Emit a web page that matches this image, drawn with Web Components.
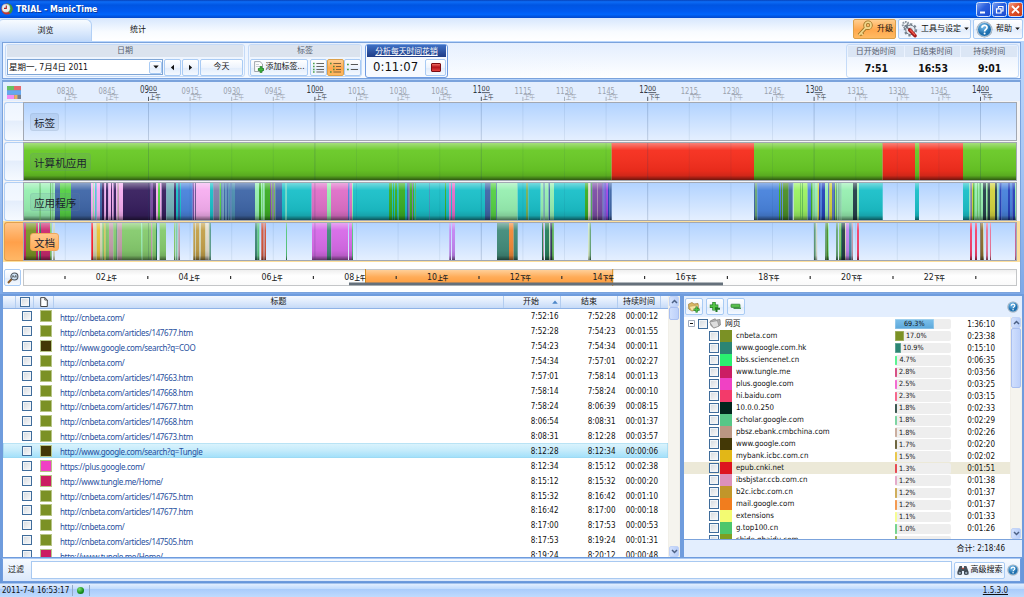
<!DOCTYPE html>
<html lang="en">
<head>
<meta charset="utf-8">
<title>ManicTime</title>
<style>
html,body{margin:0;height:100%;overflow:hidden}
body{font:8px/10px "DejaVu Sans Condensed","DejaVu Sans","Noto Sans CJK SC",sans-serif;color:#111;--line:#7ba3dc;--soft:#bcd5f7}
</style>
</head>
<body>
<manic-app></manic-app>
<script>
const def = (name, html, setup) => customElements.define(name, class extends HTMLElement {
  connectedCallback() {
    if (this.shadowRoot) return;
    const t = document.createElement('template');
    t.innerHTML = '<style>*{box-sizing:border-box}:host{display:block;box-sizing:border-box}svg{display:block;flex:none}</style>' +
      (typeof html === 'function' ? html(this) : html);
    this.attachShadow({mode: 'open'}).append(t.content.cloneNode(true));
    if (setup) setup(this);
  }
});

/* ---------- icons ---------- */
const ICONS = {
  app: [12, 12, '<circle cx="6" cy="6" r="5.6" fill="#c9352b"/><path d="M6 .4A5.6 5.6 0 0 1 9 10.7L6 6z" fill="#2f9c3c"/><circle cx="5" cy="5.2" r="4.1" fill="#e9eeee" stroke="#999" stroke-width=".5"/><path d="M5.3 2.4V5.4H3" fill="none" stroke="#a22" stroke-width="1.1"/>'],
  help: [18, 18, '<defs><radialGradient id="g" cx=".4" cy=".3"><stop offset="0" stop-color="#7cc0ee"/><stop offset="1" stop-color="#1d6fae"/></radialGradient></defs><circle cx="9" cy="9" r="8.4" fill="#8b98a5"/><circle cx="9" cy="9" r="7.4" fill="url(#g)" stroke="#e8eef4" stroke-width=".8"/><path d="M6.3 7.2C6.3 3.6 11.8 3.8 11.7 7 11.7 8.8 9.1 8.9 9.1 11" fill="none" stroke="#fff" stroke-width="1.8"/><circle cx="9.1" cy="13.2" r="1.1" fill="#fff"/>'],
  key: [18, 18, '<g stroke="#9b7224" stroke-width="3.4" fill="none"><circle cx="12" cy="5.2" r="3"/><path d="M10 7.5L3 15.2M4.6 12.6L7 14.8"/></g><g stroke="#f1d68b" stroke-width="1.8" fill="none"><circle cx="12" cy="5.2" r="3"/><path d="M10 7.5L3 15.2M4.6 12.6L7 14.8"/></g>'],
  tools: [18, 18, '<circle cx="5" cy="4" r="3" fill="none" stroke="#8d97a2" stroke-width="2.4" stroke-dasharray="1.7 .9"/><circle cx="10" cy="9.4" r="5" fill="#e8edf2" stroke="#66727e" stroke-width="1"/><circle cx="10" cy="9.4" r="6.1" fill="none" stroke="#78848f" stroke-width="2" stroke-dasharray="2.4 2.2"/><circle cx="10" cy="9.4" r="2" fill="#fff" stroke="#8894a0" stroke-width=".7"/><path d="M4 4.5L10 10" stroke="#6d7784" stroke-width="1.6"/><path d="M9.3 9.5L14.8 15.5" stroke="#a51a1a" stroke-width="3.8" stroke-linecap="round"/><path d="M9.5 9.2L15 15" stroke="#ee5a4c" stroke-width="1.4"/>'],
  addtag: [10, 12, '<path d="M.6.6H6L8.5 3V10.5H.6z" fill="#fdfdfd" stroke="#8a8f96" stroke-width=".8"/><path d="M2 3.5H5M2 5.5H6.5" stroke="#b6bcc4" stroke-width=".7"/><path d="M7 5.3V11.7M3.9 8.5H10" stroke="#16701a" stroke-width="2.5"/><path d="M7 5.8V11.2M4.4 8.5H9.5" stroke="#42b640" stroke-width="1.4"/>'],
  list: [12, 11, '<path d="M0 1.5H1.6M0 4.5H1.6M0 7.5H1.6M0 10H1.6" stroke="#4ba24b" stroke-width="1.3"/><path d="M3.4 1.5H11M3.4 4.5H11M3.4 7.5H11M3.4 10H11" stroke="#555" stroke-width=".9"/>'],
  tree: [12, 11, '<path d="M0 1.5H1.6M3 4.5H4.6M3 7.5H4.6M0 10H1.6" stroke="#4d8c3f" stroke-width="1.3"/><path d="M3.4 1.5H11M6 4.5H11M6 7.5H11M3.4 10H11" stroke="#735936" stroke-width=".9"/>'],
  short: [12, 11, '<path d="M0 2.5H1.8M0 7.5H1.8" stroke="#4ba24b" stroke-width="1.3"/><path d="M3.8 2.5H11M3.8 7.5H11" stroke="#444" stroke-width=".9"/>'],
  colors: [14, 13, '<rect width="14" height="13" fill="#8a93a2"/><rect width="7" height="4" fill="#67c162"/><rect x="7" width="7" height="4" fill="#e36a6f"/><rect y="4.4" width="14" height="4.3" fill="#64a7ef"/><rect y="9" width="7" height="4" fill="#f18cf2"/><rect x="7.4" y="9" width="3" height="4" fill="#efb05e"/><rect x="10.8" y="9" width="3.2" height="4" fill="#77808f"/>'],
  zoom: [12, 12, '<path d="M1 11L5 6.8" stroke="#8a5a28" stroke-width="2"/><circle cx="7.4" cy="4.5" r="3.5" fill="#cfe4f6" stroke="#4b525b" stroke-width="1.1"/><path d="M5.8 5.6V3.5L7.4 5 9 3.5V5.6" fill="none" stroke="#333" stroke-width=".8"/>'],
  page: [8, 10, '<path d="M.7.6H4.8L7.3 3V9.5H.7z" fill="#fff" stroke="#333" stroke-width=".9"/><path d="M4.8.6V3H7.3" fill="none" stroke="#333" stroke-width=".8"/>'],
  folderadd: [12, 12, '<path d="M.5 3.2L4 1.5 6 3 10 2.4 10.5 8 4 10 .8 8z" fill="#d9b866" stroke="#9d7b36" stroke-width=".7"/><path d="M1.2 5.5L10.8 4 9.6 8.4 3.5 9.8z" fill="#f6e3a4" stroke="#b6924b" stroke-width=".5"/><path d="M8.6 5.6V11.6M5.6 8.6H11.6" stroke="#197524" stroke-width="2.2"/><path d="M8.6 6V11.2M6 8.6H11.2" stroke="#4dc144" stroke-width="1.1"/>'],
  plus: [12, 12, '<path d="M5 1V9.5M.8 5.2H9.3" stroke="#217a22" stroke-width="3.4"/><path d="M7.5 4.5V11M4.2 7.8H11" stroke="#217a22" stroke-width="2"/><path d="M5 1.5V9M1.3 5.2H8.8" stroke="#54c346" stroke-width="2"/>'],
  minus: [12, 12, '<rect x="1" y="3.2" width="9" height="3.2" rx=".6" fill="#58c14c" stroke="#26752a" stroke-width=".7"/><path d="M3.5 7.2H11" stroke="#2c8430" stroke-width="1.3"/>'],
  folder: [12, 11, '<path d="M1.5 2.8L6 .8 7.5 2 11 1.5 11.4 7 5 10 1.8 7.5z" fill="#b4b4b4" stroke="#777" stroke-width=".7"/><path d="M.6 4L8.4 2.6 10 8.2 4.6 10z" fill="#dedede" stroke="#808080" stroke-width=".6"/>'],
  bino: [12, 11, '<path d="M2.6 1H5V4H7V1H9.4L11.5 6.5V9.5H7V6H5V9.5H.5V6.5z" fill="#47515a"/><circle cx="2.8" cy="7.9" r="1.7" fill="#95a6b4" stroke="#262d33" stroke-width=".7"/><circle cx="9.2" cy="7.9" r="1.7" fill="#95a6b4" stroke="#262d33" stroke-width=".7"/><path d="M5 3.3H7" stroke="#b84a3a" stroke-width="1.3"/>'],
  left: [5, 7, '<path d="M4 .8V6.2L.9 3.5z" fill="#111"/>'],
  right: [5, 7, '<path d="M1 .8V6.2L4.1 3.5z" fill="#111"/>'],
  down: [6, 4, '<path d="M.3.5H5.7L3 3.6z" fill="#111"/>'],
  sort: [6, 4, '<path d="M.2 3.8H5.8L3 .5z" fill="#4d86c8"/>'],
  chevup: [7, 5, '<path d="M1 4L3.5 1.5 6 4" fill="none" stroke="#4d6185" stroke-width="1.5"/>'],
  chevdown: [7, 5, '<path d="M1 1L3.5 3.5 6 1" fill="none" stroke="#4d6185" stroke-width="1.5"/>']
};
def('mt-icon', el => {
  const [w, h, p] = ICONS[el.getAttribute('name')], s = +(el.getAttribute('size') || w);
  return `<style>:host{flex:none;width:${s}px}</style><svg width="${s}" height="${s * h / w}" viewBox="0 0 ${w} ${h}">${p}</svg>`;
});

def('mt-button', `<style>:host{display:flex;align-items:center;justify-content:center;height:17px;border:1px solid #a9cbf4;border-radius:2px;background:linear-gradient(#fff,#eef4fd 50%,#e1ecfb 51%,#f4f9ff);white-space:nowrap;flex:none}
:host([hot]){border-color:#dba04a;background:linear-gradient(#ffce8f,#ffa84d 55%,#ffba62)}</style><slot></slot>`);

def('mt-check', `<style>:host{flex:none;width:10px;height:10px;border:1px solid #3f6c9b;background:linear-gradient(135deg,#d4d9de,#fbfbfb);box-shadow:inset 0 0 0 1px #f2f5f8}</style>`);

def('mt-scroll', el => `<style>:host{display:flex;flex-direction:column;justify-content:space-between;width:12px;flex:none;background:#f5f4ee;border:1px solid #f1efe8;border-width:0 1px}
b{display:flex;height:11px;align-items:center;justify-content:center;background:linear-gradient(90deg,#d3e1fd,#b7cdf8);border:1px solid #c2d3f6;border-radius:2px}
i{background:linear-gradient(90deg,#d0dffd,#bcd0fa);border:1px solid #a9bff0;border-radius:2px;height:${el.getAttribute('thumb')}px}
div{flex:1}</style><b><mt-icon name="chevup"></mt-icon></b><i></i><div></div><b><mt-icon name="chevdown"></mt-icon></b>`);

/* ---------- title bar ---------- */
def('mt-titlebar', `<style>
:host{display:flex;height:18px;align-items:center;padding:0 1px;background:linear-gradient(#0742b8,#0d6cf6 10%,#0055e2 28%,#005af0 62%,#0064fb 80%,#0148cc);flex:none}
span{flex:1;font:bold 8.7px/12px "DejaVu Sans Condensed",sans-serif;color:#fff;padding-left:3px;text-shadow:1px 1px 0 #0a3a9c}
b{width:15px;height:15px;border:1px solid #d5e2fb;border-radius:2.5px;margin-left:1px;background:linear-gradient(135deg,#7a9ff3,#2a5fdd 45%,#1c4bd0)}
b.c{background:linear-gradient(135deg,#f2a088,#e1532b 45%,#c83b16)}
</style><mt-icon name="app"></mt-icon><span><slot></slot></span>
<b><svg width="13" height="13"><path d="M3 9.5H8" stroke="#fff" stroke-width="2"/></svg></b>
<b><svg width="13" height="13"><path d="M5.5 5V3.5H10V8H8.5M3.5 5.8H8V10H3.5z" fill="none" stroke="#fff" stroke-width="1.2"/></svg></b>
<b class="c"><svg width="13" height="13"><path d="M3 3L10 10M10 3L3 10" stroke="#fff" stroke-width="1.8"/></svg></b>`);

/* ---------- tabs ---------- */
def('mt-tabs', `<style>
:host{display:flex;height:23px;padding-top:1px;background:linear-gradient(#d7e7fd,#f8fbff 60%,#fff);flex:none;align-items:flex-start}
.t{height:22px;width:92px;text-align:center;line-height:22px}
.on{border:1px solid #b2d0f6;border-bottom:0;border-left:0;border-radius:3px 6px 0 0;background:linear-gradient(#f7fbff,#dfecfd 50%,#c3daf9)}
.sp{flex:1}
mt-button{height:20px;padding:0 2px;justify-content:flex-start}
</style><div class="t on">浏览</div><div class="t">统计</div><div class="sp"></div>
<mt-button hot style="width:43px;gap:3px"><mt-icon name="key"></mt-icon>升级</mt-button>
<mt-button style="width:73px;margin-left:2px;gap:3px"><mt-icon name="tools" size="17"></mt-icon><span style="flex:1">工具与设定</span><mt-icon name="down" size="5"></mt-icon></mt-button>
<mt-button style="width:50px;margin:0 1px 0 2px;gap:3px"><mt-icon name="help" size="17"></mt-icon><span style="flex:1">帮助</span><mt-icon name="down" size="5"></mt-icon></mt-button>`);

/* ---------- toolbar ---------- */
def('mt-group', el => `<style>:host{display:flex;flex-direction:column;height:33px;border:1px solid #c5dbf8;border-radius:3px;padding:0 1px;flex:none}
h4{margin:0;height:12px;font-weight:400;font-size:8px;line-height:12px;color:#56606e;background:#dbe3ee;text-align:center}
div{display:flex;flex:1;align-items:center;padding-top:1px}</style><h4>${el.getAttribute('label')}</h4><div><slot></slot></div>`);
def('mt-toolbar', `<style>
:host{display:flex;height:37px;margin:0 3px 0 2px;padding:1px 1px 0 2px;border:1px solid var(--line);background:linear-gradient(90deg,#eef5ff,#fff0 60%),linear-gradient(#e3eefe,#fff);flex:none}
.combo{display:flex;align-items:center;width:157px;height:16px;border:1px solid #7fa6d6;background:#fff;padding-left:1px;margin-right:1px}
.combo span{flex:1;white-space:nowrap;font-size:8.5px}.combo mt-button{width:13px;height:13px}
.timer{width:83px;height:34px;border:1px solid #6f9be0;border-radius:3px;margin-left:3px;background:#f7faff}
.timer h4{margin:0 1px;height:12px;background:linear-gradient(#3f70c4,#1f3c86);color:#fff;text-align:center;font:7.8px/12px "Noto Sans CJK SC",sans-serif;text-decoration:underline}
.timer div{display:flex;height:20px;align-items:center;justify-content:space-between;padding:0 1px 0 7px;font:13px/18px "DejaVu Sans Condensed",sans-serif}
.red{width:10px;height:9px;border:1px solid #7c0d12;border-radius:1px;background:linear-gradient(#ee6a62,#b3131b 45%,#e1413f)}
.stats{display:flex;width:173px;height:34px;border:1px solid #c5dbf8;border-radius:3px;padding:1px 1px;gap:1px}
.stats div{flex:1;text-align:center}.stats h4{margin:0;background:#dbe6f5;font-weight:400;font-size:8px;line-height:11px;height:11px;color:#56606e}
.stats b{display:block;font:bold 10.4px/20px "DejaVu Sans Condensed",sans-serif;padding:1px 0 0 1px}
.sp{flex:1}
</style>
<mt-group label="日期" style="width:240px"><div class="combo"><span>星期一, 7月4日 2011</span><mt-button><mt-icon name="down"></mt-icon></mt-button></div>
<mt-button style="width:17px"><mt-icon name="left"></mt-icon></mt-button><mt-button style="width:17px;margin:0 1px"><mt-icon name="right"></mt-icon></mt-button><mt-button style="width:43px">今天</mt-button></mt-group>
<mt-group label="标签" style="width:114px;margin-left:3px"><mt-button style="width:58px;gap:2px;margin-right:2px"><mt-icon name="addtag"></mt-icon>添加标签...</mt-button><mt-button style="width:17px"><mt-icon name="list"></mt-icon></mt-button><mt-button hot style="width:17px"><mt-icon name="tree"></mt-icon></mt-button><mt-button style="width:17px"><mt-icon name="short"></mt-icon></mt-button></mt-group>
<div class="timer"><h4>分析每天时间花销</h4><div>0:11:07<mt-button style="width:21px"><span class="red"></span></mt-button></div></div>
<div class="sp"></div>
<div class="stats"><div><h4>日开始时间</h4><b>7:51</b></div><div><h4>日结束时间</h4><b>16:53</b></div><div><h4>持续时间</h4><b>9:01</b></div></div>`);

/* ---------- timeline ---------- */
const PAL = {a:'#97efb1',b:'#4067a8',c:'#55d044',d:'#f6aef0',e:'#38205f',f:'#1bc0c9',g:'#77b3bb',h:'#4983dc',i:'#837fa8',j:'#4d8fb0',k:'#3cae24',l:'#df70c8',m:'#7d4ea6',n:'#78b25a',
  o:'#a24be6',p:'#9bf263',q:'#2742ba',r:'#d3d33f',s:'#27414b',t:'#4c8f28',u:'#7b9426',v:'#cb2a70',w:'#e5dccb',x:'#e9c336',y:'#86cb6e',z:'#c39fac',
  A:'#ff202a',B:'#c3a04a',C:'#d7d7b4',D:'#59c97f',E:'#d4553a',F:'#d76be8',G:'#438c7b',H:'#f28938',I:'#29805c',J:'#36395f',K:'#dcefb4',L:'#c386f2',M:'#68a77a',N:'#f5426d',O:'#8d6f32',P:'#ec7598',Q:'#69c926',R:'#f62e1d',S:'#a776d2'};
const TRACKS = {
  tags: [],
  computer: [[0,'72 Q 1835 R 2262 Q 2648 R 2745 Q 2758 R 2889 Q 3050 .']],
  apps: [
    [0,'72 a 119 k 122 a 151 k 154 a 158 k 160 a 165 b 180 c 213 b 273 d 279 a 282 d 286 f 290 d 300 b 306 e 313 d 318 e 325 d 333 e 336 d 341 e 348 d 352 z 357 d 369 e 452 m 459 e 468 d 474 c 480 d 485 e 499 g 522 e 528 f 534 b 540 f 543 h 578 m 583 d 586 e 588 d 630 f 640 i 659 c 664 b 668 g 671 b 676 j 680 b 686 j 691 b 695 j 705 b'],
    [750,'15 a 27 k 33 a 37 c 40 a 44 k 60 m 63 n 67 m 71 n 76 b 96 f 107 a 110 f 185 l 231 a 243 l 294 h 299 l 306 a 309 f 417 k 426 f 429 k 432 f 435 k 441 f 446 k 465 f 471 b 476 m 479 k 487 m 489 k 492 f 496 k 498 f 537 b 539 f 585 k 588 f 598 l 603 f 606 l 615 f 705 b 722 c 739 b 741 a'],
    [1500,'0 a 53 f 78 n 85 f 122 a 131 b 134 a 146 b 150 a 162 f 255 k 265 w 272 b 274 k 277 m 291 z 293 m 308 b 311 o 314 q 317 o 324 q 328 b 335 . 762 b 765 .'],
    [2250,'0 . 12 b 15 M 22 h 87 k 90 h 93 t 97 h 99 t 116 b 128 . 131 p 150 k 152 p 157 k 159 p 173 h 183 k 188 a 203 r 207 q 212 h 216 q 225 a 235 q 238 r 247 q 250 b 255 p 258 M 262 a 265 M 269 a 272 M 274 a 309 s 321 a 327 f 398 . 495 f 507 . 639 f 658 a 661 i 666 r 669 k 674 a 681 k 683 a 689 k 692 a 699 s 708 a 711 M 714 s 720 r 735 s 742 a 746 h 750 q 755 h 774 q 780 h 787 q 795 a 800 .']
  ],
  docs: [
    [0,'72 v 78 u 108 v 114 a 117 v 120 I 123 v 150 y 155 . 160 C 164 . 274 A 279 C 290 x 300 C 307 y 313 x 317 y 327 z 340 y 348 M 352 z 366 y 423 a 427 y 453 z 457 y 468 I 471 . 479 y 498 . 522 y 526 . 529 D 532 . 535 z 540 . 580 B 586 C 588 B 598 C 603 B 615 C 618 w 626 C 629 I 632 .'],
    [750,'15 G 22 D 28 . 34 E 41 z 44 E 48 . 108 D 111 . 186 F 231 G 244 F 294 . 297 F 306 D 309 . 598 L 603 . 606 L 615 . 741 G 750 .'],
    [1500,'0 G 27 H 41 G 53 . 126 I 129 z 132 . 135 I 148 K 151 J 157 k 161 . 265 K 269 M 273 .'],
    [2250,'192 M 197 . 199 C 201 . 225 M 229 t 234 a 237 . 258 M 264 . 267 y 273 I 276 s 285 C 288 L 297 j 305 z 309 . 321 N 327 . 660 N 666 . 675 N 681 . 691 O 699 C 702 . 708 P 714 . 720 P 723 . 796 v 799 .']
  ]
};
const segs = name => {
  let out = '';
  for (const [off, s] of TRACKS[name]) {
    const p = s.split(' ');
    for (let i = 0; i < p.length; i += 2) {
      if (p[i + 1] === '.') continue;
      const a = (+p[i] + off) / 3, b = p[i + 2] ? (+p[i + 2] + off) / 3 : (off + 750 + (off ? 0 : 15)) / 3;
      const box = `x="${(a - 24).toFixed(2)}" width="${Math.max(b - a, .8).toFixed(2)}" height="37"`;
      out += `<rect ${box} fill="${PAL[p[i + 1]]}"/><rect ${box} fill="url(#s)"/>`;
    }
  }
  return out;
};
const ticks = (y0, y1) => Array.from({length: 23}, (_, i) => `<path d="M${(41.3 + i * 41.6).toFixed(1)} ${y0}V${y1}" stroke="#1c3c66" stroke-opacity="${(i + 2) % 4 ? .08 : .2}" stroke-width="1"/>`).join('');
def('mt-track', el => `<style>
:host{display:grid;grid-template-columns:19px 994px 1fr;height:40px;padding:1px 0 0 1px;column-gap:0}
.h{border:1px solid #b1cff5;border-right:0;border-radius:3px 0 0 3px;background:linear-gradient(#eef5ff,#f3f8ff 45%,#e4eefc 50%,#f6faff);height:39px}
.b{position:relative;border:1px solid #a2a8b2;height:39px;background:linear-gradient(#b2d3ff,#e4efff);display:flex;align-items:center}
.b svg{position:absolute;left:0;top:0}
.l{position:relative;margin-left:6px;padding:0 3px;height:18px;border-radius:3px;font:10.6px/17px "Noto Sans CJK SC",sans-serif;color:#1b2430;background:rgba(90,120,160,.13);border:1px solid rgba(110,130,160,.12)}
:host([on]){background:#fddf9c}
:host([on]) .h{border-color:#e2a04e;background:linear-gradient(#ffc58a,#ffa04a 52%,#ffb766)}
:host([on]) .l{background:linear-gradient(#ffc88d,#ffab55);border-color:#f0a75c}
</style><div class="h"></div><div class="b"><svg width="992" height="37"><defs><linearGradient id="s" x2="0" y2="1"><stop offset="0" stop-color="#fff" stop-opacity=".4"/><stop offset=".2" stop-color="#fff" stop-opacity=".04"/><stop offset=".75" stop-color="#000" stop-opacity=".06"/><stop offset=".88" stop-color="#000" stop-opacity=".15"/><stop offset="1" stop-color="#000" stop-opacity=".55"/></linearGradient></defs>${segs(el.getAttribute('data'))}${ticks(0, 37)}</svg><div class="l"><slot></slot></div></div>`);

def('mt-axis', () => {
  let s = '';
  for (let i = 0; i < 23; i++) {
    const q = (i + 2) % 4, h = 8 + Math.floor((i + 2) / 4), x = 65.3 + i * 41.6, m = ['00','15','30','45'][q];
    const hh = String(h).padStart(2, '0'), ap = h < 12 ? '上午' : '下午', col = q ? '#9aa2ad' : '#333a44';
    s += `<g fill="${col}"><text x="${x - 8.5}" y="${q ? 11.6 : 11.2}" font-size="${q ? 8 : 10}" textLength="${q ? 8.6 : 9}" lengthAdjust="spacingAndGlyphs">${hh}</text><text x="${x + .3}" y="${q ? 11.6 : 9.3}" font-size="${q ? 8 : 7.2}" textLength="8.2" lengthAdjust="spacingAndGlyphs">${m}</text><text class="c" x="${x + 1.2}" y="17.2" font-size="6" textLength="11" lengthAdjust="spacingAndGlyphs">${ap}</text><path d="M${x} 19.5V14.8M${x + .5} ${q ? 12.6 : 10.6}H${x + 8.5}" stroke="${col}" stroke-width=".8" fill="none"/></g>`;
  }
  return `<style>:host{display:flex;height:19px;align-items:center}svg.x{margin-left:-18px}mt-icon{margin:1px 0 0 4px}text{font-family:"DejaVu Sans Condensed",sans-serif}.c{font-family:"Noto Sans CJK SC",sans-serif}</style><mt-icon name="colors"></mt-icon><svg class="x" width="1018" height="20" viewBox="3 0 1018 20">${s}</svg>`;
});

def('mt-range', () => {
  let s = '';
  for (let k = 1; k < 24; k++) {
    const x = 24 + k * 41.4;
    s += k % 2 ? `<path d="M${x - .4} 7V10" stroke="#333" stroke-width="1.2"/>` :
      `<text x="${x - 11}" y="10.8" font-size="9" textLength="10" lengthAdjust="spacingAndGlyphs">${String(k).padStart(2, '0')}</text><text class="c" x="${x - .6}" y="10.6" font-size="6" textLength="10.8" lengthAdjust="spacingAndGlyphs">${k < 12 ? '上午' : '下午'}</text>`;
  }
  return `<style>:host{display:flex;margin:7px 0 0 1px;height:18px}mt-button{width:17px;margin-right:2px}
  text{font-family:"DejaVu Sans Condensed",sans-serif;fill:#222}.c{font-family:"Noto Sans CJK SC",sans-serif;font-weight:bold}</style>
  <mt-button><mt-icon name="zoom"></mt-icon></mt-button>
  <svg width="995" height="18" viewBox="23 0 995 18"><defs><linearGradient id="o" x2="0" y2="1"><stop offset="0" stop-color="#ffcf98"/><stop offset=".5" stop-color="#ffac58"/><stop offset="1" stop-color="#ff9c3c"/></linearGradient><linearGradient id="w" x2="0" y2="1"><stop offset="0" stop-color="#eee"/><stop offset=".4" stop-color="#fff"/><stop offset="1" stop-color="#fafafa"/></linearGradient></defs>
  <rect x="23.5" y=".5" width="993" height="16" fill="url(#w)" stroke="#c4c6c8"/><rect x="365" y="1" width="248" height="14" fill="url(#o)"/><path d="M365.5 0V14M612.7 0V17" stroke="#d08a20"/><rect x="349" y="13.5" width="374" height="2.8" fill="#65707b"/>${s}</svg>`;
});

def('mt-timeline', `<style>:host{display:flex;flex-direction:column;height:213px;margin:1px 3px 0 2px;border:1px solid var(--line);border-top-width:2px;background:#e3eefe;flex:none}
.rows{background:#f4f4f6;height:161px;border-bottom:1px solid #fddf9c}
.r{flex:1;background:#fff}</style>
<mt-axis></mt-axis><div class="rows"><mt-track data="tags">标签</mt-track><mt-track data="computer">计算机应用</mt-track><mt-track data="apps">应用程序</mt-track><mt-track data="docs" on>文档</mt-track></div><div class="r"><mt-range></mt-range></div>`);

/* ---------- activity list ---------- */
const OL = '#7b9125', BR = '#433806', MG = '#cb1d63', PK = '#f041c4';
const ROWS = [
  [OL,'http://cnbeta.com/','7:52:16','7:52:28','00:00:12'],[OL,'http://cnbeta.com/articles/147677.htm','7:52:28','7:54:23','00:01:55'],
  [BR,'http://www.google.com/search?q=COO','7:54:23','7:54:34','00:00:11'],[OL,'http://cnbeta.com/','7:54:34','7:57:01','00:02:27'],
  [OL,'http://cnbeta.com/articles/147663.htm','7:57:01','7:58:14','00:01:13'],[OL,'http://cnbeta.com/articles/147668.htm','7:58:14','7:58:24','00:00:10'],
  [OL,'http://cnbeta.com/articles/147677.htm','7:58:24','8:06:39','00:08:15'],[OL,'http://cnbeta.com/articles/147668.htm','8:06:54','8:08:31','00:01:37'],
  [OL,'http://cnbeta.com/articles/147673.htm','8:08:31','8:12:28','00:03:57'],[BR,'http://www.google.com/search?q=Tungle','8:12:28','8:12:34','00:00:06'],
  [PK,'https://plus.google.com/','8:12:34','8:15:12','00:02:38'],[MG,'http://www.tungle.me/Home/','8:15:12','8:15:32','00:00:20'],
  [OL,'http://cnbeta.com/articles/147675.htm','8:15:32','8:16:42','00:01:10'],[OL,'http://cnbeta.com/articles/147677.htm','8:16:42','8:17:00','00:00:18'],
  [OL,'http://cnbeta.com/','8:17:00','8:17:53','00:00:53'],[OL,'http://cnbeta.com/articles/147505.htm','8:17:53','8:19:24','00:01:31'],
  [MG,'http://www.tungle.me/Home/','8:19:24','8:20:12','00:00:48']];
def('mt-list', () => `<style>
:host{display:flex;width:677px;height:261px;background:#fff;overflow:hidden;flex:none}
.m{flex:1;overflow:hidden}
.g{display:grid;grid-template-columns:13px 18px 20px 450px 57px 57px 50px;align-items:center}
.hd{height:13px;background:linear-gradient(#f4f8ff,#d9e7fb 60%,#c6daf7);border-bottom:1px solid #8fb3e6;text-align:center}
.hd>*{border-right:1px solid #b3cdf0;height:12px;display:flex;align-items:center;justify-content:center;line-height:12px;gap:12px}
.row{height:14.93px}
.row.on{background:linear-gradient(#dcf4fd,#c4ebfb 50%,#9fdffa);box-shadow:inset 0 0 0 .6px #98d4ee}
.row span{text-align:right;padding:2px 2.5px 0 0}.row span:last-child{padding-right:10px}
.row .u{text-align:left;color:#1f4f9e;padding:2px 0 0 6px;font:8px/11px "Noto Sans","Open Sans",sans-serif;letter-spacing:-.34px}
mt-check{justify-self:center}.row mt-check{margin-left:3px}
i{width:12px;height:12px;margin-left:6px;border:.6px solid #b7c586}
</style><div class="m"><div class="g hd"><div></div><div><mt-check></mt-check></div><div><mt-icon name="page"></mt-icon></div><div>标题</div><div style="padding-left:17px;gap:13px">开始<mt-icon name="sort"></mt-icon></div><div>结束</div><div style="margin-right:7px;width:43px">持续时间</div></div>
${ROWS.map((r, i) => `<div class="g row${i === 9 ? ' on' : ''}"><div></div><mt-check></mt-check><i style="background:${r[0]}"></i><span class="u">${r[1]}</span><span>${r[2]}</span><span>${r[3]}</span><span>${r[4]}</span></div>`).join('')}</div><mt-scroll thumb="13"></mt-scroll>`);

/* ---------- summary ---------- */
const SITES = [[OL,'cnbeta.com','17.0%','0:23:38',9],['#2c8573','www.google.com.hk','10.9%','0:15:10',6],['#2af070','bbs.sciencenet.cn','4.7%','0:06:35',2.4],[MG,'www.tungle.me','2.8%','0:03:56',2],[PK,'plus.google.com','2.5%','0:03:25',2],
  ['#f33a6a','hi.baidu.com','2.3%','0:03:15',2],['#02251c','10.0.0.250','1.8%','0:02:33',2],['#57c787','scholar.google.com','1.8%','0:02:29',2],['#bb9683','pbsz.ebank.cmbchina.com','1.8%','0:02:26',2],[BR,'www.google.com','1.7%','0:02:20',2],
  ['#e2b717','mybank.icbc.com.cn','1.5%','0:02:02',2],['#dd141f','epub.cnki.net','1.3%','0:01:51',2],['#dc91ba','ibsbjstar.ccb.com.cn','1.2%','0:01:38',2],['#c1962a','b2c.icbc.com.cn','1.2%','0:01:37',2],['#f17d1e','mail.google.com','1.2%','0:01:37',2],
  ['#f3fb72','extensions','1.1%','0:01:33',2],['#4cc66c','g.top100.cn','1.0%','0:01:26',2],['#7f9e22','shide.qbaidu.com','','',2]];
const bar = (c, w, t) => `<div class="bar"><b style="width:${w}px;background:${c}"></b><em>${t}</em></div>`;
def('mt-summary', () => `<style>
:host{display:flex;flex-direction:column;width:338px;height:261px;background:#e3eefe;overflow:hidden;flex:none}
.tb{display:flex;height:21px;align-items:center;padding:0 3px 0 1px;gap:3px;flex:none}.tb mt-button{width:18px}
.mid{display:flex;flex:1;overflow:hidden;background:#fff;border-bottom:1px solid var(--line)}
.m{flex:1;overflow:hidden;padding-top:.6px}
.r{display:flex;height:12.06px;align-items:center;padding-left:25px;position:relative}
.r.top{padding-left:4px}
.r.on{background:#ece9d8}
i{width:12px;height:12px;margin:0 4px 0 1px;flex:none}
.n{flex:1;white-space:nowrap;font-size:7.8px}
.bar{display:flex;align-items:center;width:56px;height:10.5px;background:#eee;border-radius:2px;flex:none;margin-top:1px}
.bar b{display:block;height:9.5px;box-shadow:inset 0 0 0 .7px #fff5;flex:none}
em{font:7.2px/10px "DejaVu Sans Condensed",sans-serif;padding-left:2px;font-style:normal}
.t{width:59px;text-align:right;padding-right:15px;margin-top:2px}
.f{height:17px;line-height:17px;text-align:right;padding-right:17px;flex:none}
</style><div class="tb"><mt-button><mt-icon name="folderadd"></mt-icon></mt-button><mt-button><mt-icon name="plus"></mt-icon></mt-button><mt-button><mt-icon name="minus"></mt-icon></mt-button><div style="flex:1"></div><mt-icon name="help" size="12"></mt-icon></div>
<div class="mid"><div class="m"><div class="r top"><svg width="7" height="7" style="margin-right:3px"><path d="M.5.5H6.5V6.5H.5z" fill="#fff" stroke="#8896ab" stroke-width=".8"/><path d="M2 3.5H5" stroke="#111"/></svg><mt-check></mt-check><mt-icon name="folder" style="margin:0 4px 0 1px"></mt-icon><span class="n">网页</span><div class="bar"><b style="width:39px;background:linear-gradient(#7dc0ea,#5ba7da)"></b><em style="margin-left:-32px">69.3%</em></div><span class="t">1:36:10</span></div>
${SITES.map((s, i) => `<div class="r${i === 11 ? ' on' : ''}"><mt-check></mt-check><i style="background:${s[0]}"></i><span class="n">${s[1]}</span>${bar(s[0], s[4], s[2])}<span class="t">${s[3]}</span></div>`).join('')}</div><mt-scroll thumb="60"></mt-scroll></div>
<div class="f">合计: 2:18:46</div>`);

/* ---------- filter and status ---------- */
def('mt-filter', `<style>:host{display:flex;align-items:center;height:24px;margin:0 3px 0 2px;padding:0 1px 0 5px;border:1px solid #6f9bdd;border-top:1px solid #a9c8f3;background:linear-gradient(#f6faff,#dbe8fb);flex:none}
div{flex:1;height:18px;border:1px solid #a8c9f1;background:#fff;margin:0 2px 0 7px}</style><span>过滤</span><div></div><mt-button style="width:51px;gap:2px"><mt-icon name="bino"></mt-icon>高级搜索</mt-button><mt-icon name="help" size="12" style="margin-left:2px"></mt-icon>`);
def('mt-status', `<style>:host{display:flex;align-items:center;flex:1;padding:2px 16px 0 2px;background:linear-gradient(#6696da,#6696da 1px,#e2eeff 2px,#c3dcfd 45%,#aaccfb 50%,#bfdafd);gap:4px}
i{width:1px;height:11px;background:#93aac6;margin-left:-1px}b{width:7px;height:7px;border-radius:4px;background:radial-gradient(circle at 35% 30%,#7be06c,#158d1d 60%,#0c6113)}u{margin-left:auto}</style><span>2011-7-4 16:53:17</span><i></i><b></b><i style="margin-left:1px"></i><u>1.5.3.0</u>`);

def('manic-app', `<style>
:host{display:flex;flex-direction:column;width:1024px;height:597px;overflow:hidden;background:linear-gradient(#b8d6fd 60px,#a8c8f6 150px,#7ea9e8 290px,#6696da)}
.main{display:flex;height:264px;padding:2px 2px 0 3px;gap:4px;flex:none;margin-top:1px;background:#6f9cdd}
</style><mt-titlebar>TRIAL - ManicTime</mt-titlebar><mt-tabs></mt-tabs><mt-toolbar style="margin-top:1px"></mt-toolbar><mt-timeline></mt-timeline>
<div class="main"><mt-list></mt-list><mt-summary></mt-summary></div><mt-filter></mt-filter><mt-status></mt-status>`);
</script>
</body>
</html>
